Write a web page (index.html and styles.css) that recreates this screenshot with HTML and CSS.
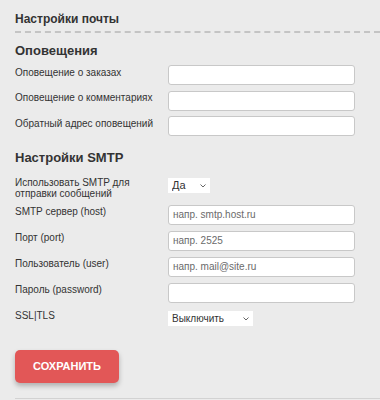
FILE: index.html
```html
<!DOCTYPE html>
<html lang="ru">
<head>
<meta charset="utf-8">
<link rel="stylesheet" href="styles.css">
</head>
<body>
<div class="page">
  <h1 class="title">Настройки почты</h1>

  <h2 class="section first">Оповещения</h2>
  <div class="group">
    <div class="row"><label class="lbl">Оповещение о заказах</label><input class="inp" type="text"></div>
    <div class="row"><label class="lbl">Оповещение о комментариях</label><input class="inp" type="text"></div>
    <div class="row"><label class="lbl">Обратный адрес оповещений</label><input class="inp" type="text"></div>
  </div>

  <h2 class="section">Настройки SMTP</h2>
  <div class="group smtp">
    <div class="row"><label class="lbl">Использовать SMTP для<br>отправки сообщений</label>
      <span class="sel sel-yes"><select><option>Да</option><option>Нет</option></select>
        <svg class="chev" width="6" height="4" viewBox="0 0 6 4"><path d="M0.5 0.5 L3 3 L5.5 0.5" fill="none" stroke="#666" stroke-width="1"/></svg></span></div>
    <div class="row"><label class="lbl">SMTP сервер (host)</label><input class="inp" type="text" placeholder="напр. smtp.host.ru"></div>
    <div class="row"><label class="lbl">Порт (port)</label><input class="inp" type="text" placeholder="напр. 2525"></div>
    <div class="row"><label class="lbl">Пользователь (user)</label><input class="inp" type="text" placeholder="напр. mail@site.ru"></div>
    <div class="row"><label class="lbl">Пароль (password)</label><input class="inp" type="password"></div>
    <div class="row"><label class="lbl">SSL|TLS</label>
      <span class="sel sel-ssl"><select><option>Выключить</option><option>SSL</option><option>TLS</option></select>
        <svg class="chev" width="6" height="4" viewBox="0 0 6 4"><path d="M0.5 0.5 L3 3 L5.5 0.5" fill="none" stroke="#666" stroke-width="1"/></svg></span></div>
  </div>

  <button class="save" type="button">СОХРАНИТЬ</button>
  <div class="bottom-line"></div>
</div>
</body>
</html>
```

FILE: styles.css
```css
html, body {
  margin: 0;
  padding: 0;
  background: #ebebeb;
  font-family: "Liberation Sans", Arial, sans-serif;
  color: #333;
}

.page {
  padding-left: 15px;
}

.title {
  margin: 0;
  padding-top: 12px;
  padding-bottom: 5px;
  font-size: 12px;
  line-height: 14px;
  font-weight: bold;
  color: #333;
  border-bottom: 2px dashed #c4c4c4;
}

.section {
  margin: 13.5px 0 10.5px;
  font-size: 13px;
  line-height: 15px;
  font-weight: bold;
  color: #333;
}

.section.first {
  margin-top: 9.5px;
  margin-bottom: 7.5px;
}

.group {
  display: flex;
  flex-direction: column;
  gap: 5.5px;
}

.group.smtp {
  gap: 6px;
}

.row {
  display: flex;
  align-items: flex-start;
}

.lbl {
  flex: 0 0 153px;
  padding-top: 1.6px;
  font-size: 10px;
  line-height: 11px;
  color: #333;
}

.inp {
  box-sizing: border-box;
  width: 187px;
  height: 20px;
  margin: 0;
  padding: 0 4px;
  border: 1px solid #c8c8c8;
  border-radius: 3px;
  background: #fff;
  font-family: "Liberation Sans", Arial, sans-serif;
  font-size: 10px;
  color: #333;
  outline: none;
}

.inp::placeholder {
  color: #6a6a6a;
}

.sel {
  position: relative;
  display: block;
  margin-top: 3px;
}

.sel select {
  display: block;
  box-sizing: border-box;
  height: 15px;
  margin: 0;
  padding: 0 0 0 4px;
  border: none;
  border-radius: 0;
  background: #fff;
  appearance: none;
  -webkit-appearance: none;
  font-family: "Liberation Sans", Arial, sans-serif;
  font-size: 10px;
  line-height: 15px;
  color: #333;
  outline: none;
}

.sel-yes select { width: 42px; font-size: 11px; }
.sel-ssl { margin-top: 2px; }
.sel-ssl select { width: 85px; }

.chev {
  position: absolute;
  right: 4px;
  top: 6px;
}

.save {
  display: block;
  margin-top: 24px;
  width: 104px;
  height: 33px;
  padding: 0;
  border: none;
  border-radius: 5px;
  background: #e25757;
  color: #fff;
  font-family: "Liberation Sans", Arial, sans-serif;
  font-size: 11px;
  font-weight: bold;
  box-shadow: 0 3px 5px rgba(0, 0, 0, 0.25);
  cursor: pointer;
}

.bottom-line {
  margin-top: 15px;
  height: 1px;
  background: #d2d2d2;
}
```
